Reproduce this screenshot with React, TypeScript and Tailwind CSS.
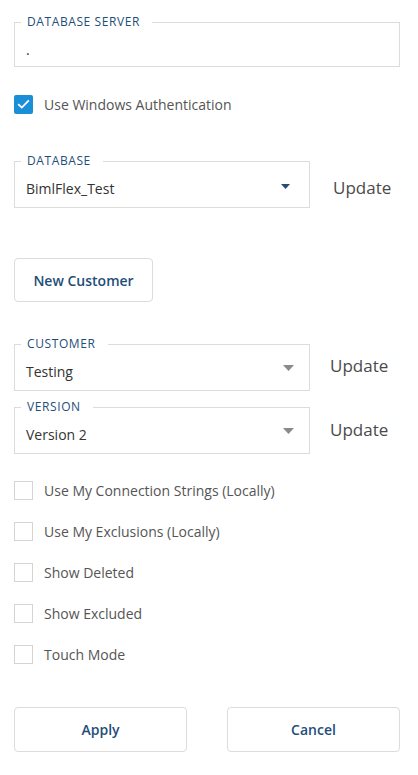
import React from 'react';

const FONT = { fontFamily: '"Open Sans", "Noto Sans", sans-serif' };

const Caret: React.FC<{ dark?: boolean }> = ({ dark }) =>
  dark ? (
    <svg width="9" height="5" viewBox="0 0 9 5" className="shrink-0">
      <path d="M0 0h9L4.5 5z" fill="#1f4e79" />
    </svg>
  ) : (
    <svg width="11" height="6" viewBox="0 0 11 6" className="shrink-0">
      <path d="M0 0h11L5.5 6z" fill="#8a8a8a" />
    </svg>
  );

const Field: React.FC<{
  label: string;
  value: string;
  select?: boolean;
  dark?: boolean;
  width: string;
  pb?: string;
}> = ({ label, value, select, dark, width, pb = 'pb-[9px]' }) => (
  <fieldset className={`border border-[#dcdcdc] ${width} px-[11px] pt-[9px] ${pb}`}>
    <legend className="ml-[-5px] pl-[6px] pr-[12px] text-[12px] leading-[16px] tracking-[0.6px] text-[#1f4e79] uppercase">
      {label}
    </legend>
    <div className="flex items-center justify-between h-[20px]">
      <span className="text-[14px] text-[#333]">{value}</span>
      {select && (
        <span className={dark ? 'mr-[8px] -mt-[4px]' : 'mr-[4px] -mt-[6px]'}>
          <Caret dark={dark} />
        </span>
      )}
    </div>
  </fieldset>
);

const Check: React.FC<{ label: string; checked?: boolean }> = ({ label, checked }) => (
  <label className="flex items-center gap-[11px] h-[20px]">
    {checked ? (
      <span className="w-[19px] h-[19px] rounded-[2px] bg-[#1a8fd8] flex items-center justify-center">
        <svg width="13" height="10" viewBox="0 0 13 10">
          <path d="M1.2 5.2l3.6 3.4L11.8 1.4" stroke="#fff" strokeWidth="1.8" fill="none" />
        </svg>
      </span>
    ) : (
      <span className="w-[19px] h-[19px] border border-[#d4d4d4] bg-white" />
    )}
    <span className="text-[14px] text-[#555]">{label}</span>
  </label>
);

const Btn: React.FC<{ children: React.ReactNode; className?: string }> = ({ children, className }) => (
  <button
    className={`border border-[#dcdcdc] rounded-[4px] bg-white text-[14px] font-semibold text-[#1f4e79] ${className}`}
  >
    {children}
  </button>
);

export default function App() {
  return (
    <div className="w-[418px] h-[775px] bg-white px-[14px] pt-[14px]" style={FONT}>
      <div className="w-[386px]">
        <Field label="Database Server" value="." width="w-[386px]" pb="pb-[7px]" />

        <div className="mt-[27px]">
          <Check label="Use Windows Authentication" checked />
        </div>

        <div className="flex items-center mt-[39px]">
          <Field label="Database" value="BimlFlex_Test" select dark width="w-[296px]" />
          <span className="ml-[23px] mt-[14px] text-[17px] text-[#4a4a4a]">Update</span>
        </div>

        <Btn className="mt-[50px] w-[139px] h-[44px]">New Customer</Btn>

        <div className="flex items-center mt-[34px]">
          <Field label="Customer" value="Testing" select width="w-[296px]" />
          <span className="ml-[20px] mt-[5px] text-[17px] text-[#4a4a4a]">Update</span>
        </div>

        <div className="flex items-center mt-[8px]">
          <Field label="Version" value="Version 2" select width="w-[296px]" />
          <span className="ml-[20px] mt-[6px] text-[17px] text-[#4a4a4a]">Update</span>
        </div>

        <div className="flex flex-col gap-[21px] mt-[26px]">
          <Check label="Use My Connection Strings (Locally)" />
          <Check label="Use My Exclusions (Locally)" />
          <Check label="Show Deleted" />
          <Check label="Show Excluded" />
          <Check label="Touch Mode" />
        </div>

        <div className="flex justify-between mt-[43px]">
          <Btn className="w-[173px] h-[45px]">Apply</Btn>
          <Btn className="w-[173px] h-[45px]">Cancel</Btn>
        </div>
      </div>
    </div>
  );
}
